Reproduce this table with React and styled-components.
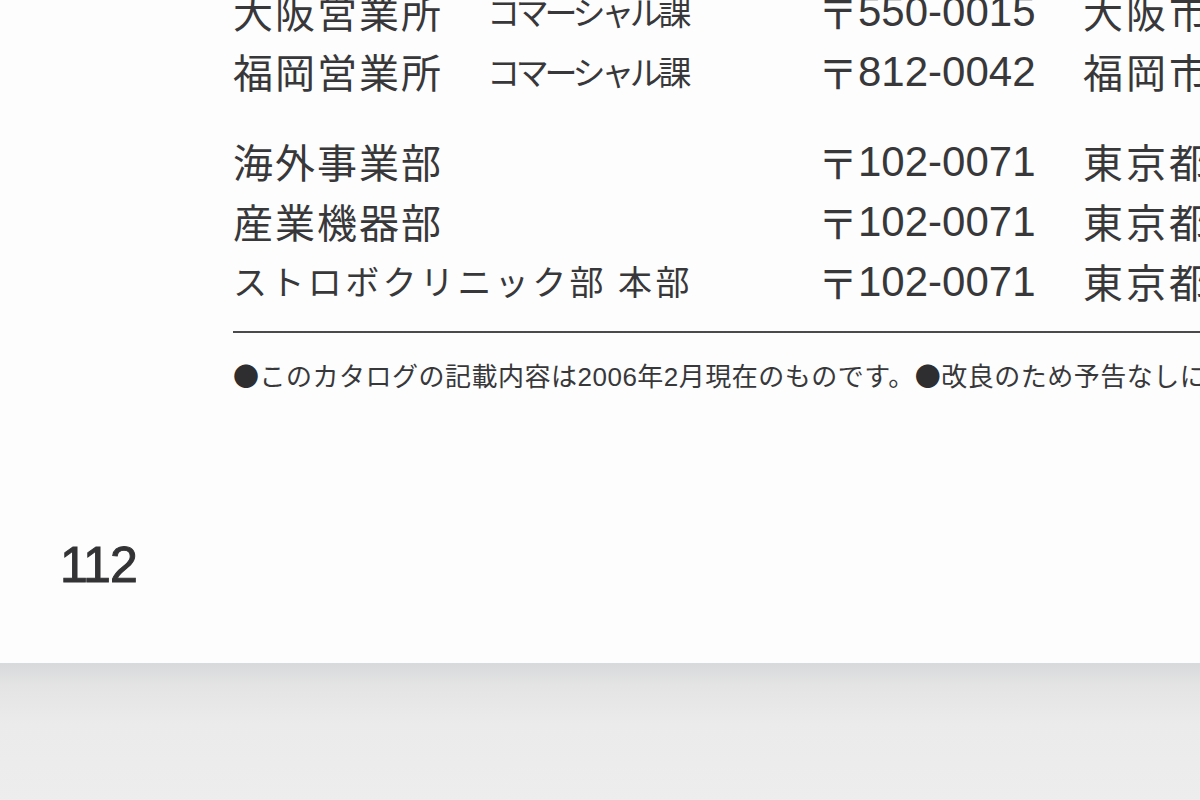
import React from 'react';
import styled, { createGlobalStyle } from 'styled-components';

const offices = [
    { name: '大阪営業所', section: 'コマーシャル課', zip: '550-0015', city: '大阪市' },
    { name: '福岡営業所', section: 'コマーシャル課', zip: '812-0042', city: '福岡市' },
];

const departments = [
    { name: '海外事業部', zip: '102-0071', city: '東京都' },
    { name: '産業機器部', zip: '102-0071', city: '東京都' },
    { name: 'ストロボクリニック部 本部', zip: '102-0071', city: '東京都', small: true },
];

export default function App () {
    return (
        <>
            <GlobalStyle />
            <Sheet>
                <Content>
                    <Table>
                        {offices.map((o) => (
                            <Row key={o.zip}>
                                <Name>{o.name}</Name>
                                <Section>{o.section}</Section>
                                <Zip><PostMark>〒</PostMark>{o.zip}</Zip>
                                <City>{o.city}</City>
                            </Row>
                        ))}
                        <GroupGap />
                        {departments.map((d, i) => (
                            <Row key={i}>
                                <Name $wide $small={d.small}>{d.name}</Name>
                                <Zip><PostMark>〒</PostMark>{d.zip}</Zip>
                                <City>{d.city}</City>
                            </Row>
                        ))}
                    </Table>
                    <Rule />
                    <Note>
                        <Bullet>●</Bullet>このカタログの記載内容は2006年2月現在のものです。
                        <Bullet>●</Bullet>改良のため予告なしに変更することがあります。
                    </Note>
                </Content>
                <PageNumber>112</PageNumber>
            </Sheet>
            <Desk />
        </>
    );
}

const GlobalStyle = createGlobalStyle`
    html, body {
        margin: 0;
        width: 1200px;
        height: 800px;
        overflow: hidden;
        background: #ebebeb;
    }
`;

const Sheet = styled.div`
    height: 663px;
    background-color: #fdfdfd;
    overflow: hidden;
    color: #38383b;
    font-family: "Liberation Sans", "Noto Sans CJK JP", sans-serif;
`;

const Content = styled.div`
    padding-left: 233px;
`;

const Table = styled.div`
    margin-top: -21px;
`;

const Row = styled.div`
    display: grid;
    grid-template-columns: 254px 336px 260px 1fr;
    height: 60px;
    align-items: center;
    white-space: nowrap;
`;

const GroupGap = styled.div`
    height: 30px;
`;

const Name = styled.div`
    grid-column: ${(p) => (p.$wide ? 'span 2' : 'auto')};
    font-family: "Noto Sans CJK JP", sans-serif;
    font-size: ${(p) => (p.$small ? '34px' : '40px')};
    letter-spacing: ${(p) => (p.$small ? '3.4px' : '2px')};
    line-height: 60px;
`;

const Section = styled.div`
    font-family: "Noto Sans CJK JP", sans-serif;
    font-size: 33px;
    letter-spacing: -4.3px;
    line-height: 60px;
`;

const Zip = styled.div`
    font-size: 42px;
    line-height: 60px;
`;

const PostMark = styled.span`
    display: inline-block;
    margin-left: -5px;
    font-family: "Noto Sans CJK JP", sans-serif;
    font-size: 40px;
    transform: translateY(3px);
`;

const City = styled.div`
    font-family: "Noto Sans CJK JP", sans-serif;
    font-size: 40px;
    letter-spacing: 3px;
    line-height: 60px;
`;

const Rule = styled.div`
    margin-top: 22px;
    height: 2px;
    background-color: #4a4a4c;
`;

const Note = styled.div`
    margin-top: 27px;
    font-size: 26px;
    letter-spacing: 0.5px;
    line-height: 30px;
    white-space: nowrap;
`;

const Bullet = styled.span`
    font-family: "Noto Sans CJK JP", sans-serif;
    font-size: 26px;
    color: #2e2e30;
`;

const PageNumber = styled.div`
    margin-top: 148px;
    padding-left: 60px;
    font-size: 50px;
    letter-spacing: -1px;
    line-height: 50px;
    color: #333336;
    -webkit-text-stroke: 1px #333336;
`;

const Desk = styled.div`
    height: 137px;
    border-top: 1px solid #d6dbe0;
    background: linear-gradient(#d8d9db 0, #e4e4e4 22px, #ebebeb 60px, #ededed 100%);
`;
